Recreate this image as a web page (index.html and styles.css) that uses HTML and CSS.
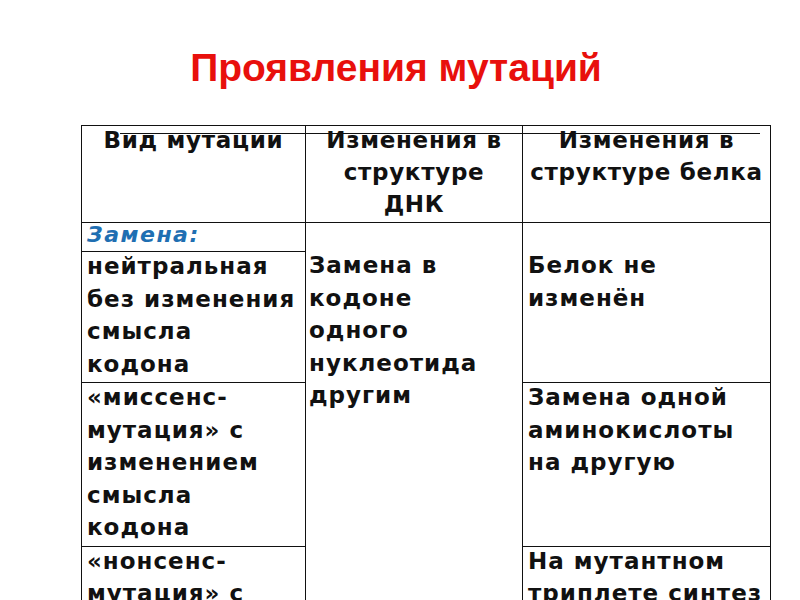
FILE: index.html
```html
<!DOCTYPE html>
<html lang="ru">
<head>
<meta charset="utf-8">
<link rel="stylesheet" href="styles.css">
</head>
<body>
<div class="slide">
  <h1 class="title">Проявления мутаций</h1>
  <div class="table-wrap">
    <table class="grid">
      <colgroup>
        <col class="c1"><col class="c2"><col class="c3">
      </colgroup>
      <tr class="head">
        <th><div class="t">Вид мутации</div></th>
        <th><div class="t">Изменения в<br>структуре<br>ДНК</div></th>
        <th><div class="t">Изменения в<br>структуре белка</div></th>
      </tr>
      <tr class="sub">
        <td class="label"><div class="t">Замена:</div></td>
        <td rowspan="4" class="mid"><div class="t">Замена в<br>кодоне<br>одного<br>нуклеотида<br>другим</div></td>
        <td rowspan="2" class="right first"><div class="t">Белок не<br>изменён</div></td>
      </tr>
      <tr>
        <td><div class="t">нейтральная<br>без изменения<br>смысла<br>кодона</div></td>
      </tr>
      <tr>
        <td><div class="t">«миссенс-<br>мутация» с<br>изменением<br>смысла<br>кодона</div></td>
        <td class="right"><div class="t">Замена одной<br>аминокислоты<br>на другую</div></td>
      </tr>
      <tr>
        <td><div class="t">«нонсенс-<br>мутация» с<br>образованием<br>стоп-кодона</div></td>
        <td class="right"><div class="t">На мутантном<br>триплете синтез<br>белка<br>прекращается</div></td>
      </tr>
    </table>
    <div class="overline"></div>
  </div>
</div>
</body>
</html>
```
FILE: styles.css
```css
html, body {
  margin: 0;
  padding: 0;
  background: #ffffff;
  overflow: hidden;
}
.slide {
  width: 800px;
  height: 600px;
  overflow: hidden;
}
.title {
  margin: 0;
  padding: 45px 8px 0 0;
  height: 81px;
  box-sizing: border-box;
  text-align: center;
  font-family: "Liberation Sans", Arial, sans-serif;
  font-weight: bold;
  font-size: 39px;
  line-height: 45px;
  color: #e8100c;
  white-space: nowrap;
}
.table-wrap {
  position: relative;
  margin: 44px 0 0 81px;
  width: 689px;
}
.grid {
  border-collapse: collapse;
  width: 689px;
  table-layout: fixed;
  font-family: "DejaVu Sans", sans-serif;
  font-weight: bold;
  font-size: 23px;
  line-height: 32.5px;
  color: #111;
}
.c1 { width: 224px; }
.c2 { width: 217px; }
.c3 { width: 248px; }
.grid th, .grid td {
  border: 1px solid #111;
  padding: 0 0 0 5px;
  vertical-align: top;
  text-align: left;
  white-space: nowrap;
  letter-spacing: 1px;
}
.t {
  margin-top: -2px;
  margin-bottom: 2px;
}
.grid .head th {
  text-align: center;
  padding: 0;
  line-height: 32px;
  letter-spacing: 0.7px;
  font-weight: bold;
}
.grid .label {
  font-style: italic;
  font-size: 22px;
  line-height: 28px;
  letter-spacing: 1.5px;
  color: #1f6fb2;
}
.grid .mid {
  padding-left: 3px;
  padding-top: 28px;
}
.grid .right.first {
  padding-top: 28px;
}
.overline {
  position: absolute;
  left: 39px;
  top: 8px;
  width: 640px;
  height: 1px;
  background: #111;
}
```
